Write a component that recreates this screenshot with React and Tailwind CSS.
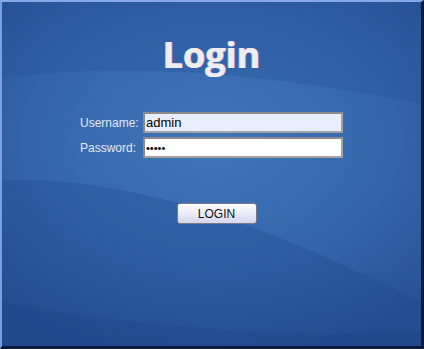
import React from "react";

export default function App() {
  return (
    <div className="w-[424px] h-[349px] bg-[#c0c0c0]">
      <div className="relative w-[424px] h-[349px] overflow-hidden border-t-2 border-l-2 border-r-[3px] border-b-[3px] border-t-[#86a8e6] border-l-[#7c9fe0] border-r-[#0d1a3c] border-b-[#0d1a3c] bg-[radial-gradient(ellipse_75%_65%_at_50%_40%,#4076ba_0%,#3566ac_55%,#284f94_100%)]">
        {/* background waves */}
        <svg
          className="absolute inset-0 pointer-events-none"
          width="419"
          height="344"
          viewBox="0 0 419 344"
        >
          <path d="M0 76 C120 60 260 70 419 102 L419 0 L0 0 Z" fill="#1f4a92" opacity="0.25" />
          <path d="M0 178 C80 175 170 195 250 225 C320 252 380 280 419 300 L419 344 L0 344 Z" fill="#1c4388" opacity="0.28" />
          <path d="M0 300 C150 328 300 336 419 330 L419 344 L0 344 Z" fill="#173a7a" opacity="0.2" />
        </svg>

        <div className="relative flex flex-col items-center pt-[35px]">
          <h1 className="text-[36px] leading-none font-bold text-[#eeeeee] font-['Open_Sans',sans-serif] [text-shadow:0.6px_0_0_#f0a0c8,-0.6px_0_0_#a0e0ff]">
            Login
          </h1>

          <div className="mt-[39px] grid grid-cols-[63px_200px] gap-y-1 items-center font-['Liberation_Sans',Arial,sans-serif]">
            <label className="text-[12px] text-[#e2eaf7]">Username:</label>
            <input
              className="h-[21px] w-[200px] border-2 border-[#a2a2a2] border-t-[#8a8a8a] border-l-[#8a8a8a] bg-[#e8eefb] px-[1px] text-[13px] text-black outline-none"
              defaultValue="admin"
            />
            <label className="text-[12px] text-[#e2eaf7]">Password:</label>
            <input
              type="password"
              className="h-[21px] w-[200px] border-2 border-[#a2a2a2] border-t-[#8a8a8a] border-l-[#8a8a8a] bg-white px-[1px] text-[11px] text-black outline-none"
              defaultValue="admin"
            />
          </div>

          <button className="mt-[45px] ml-[10px] h-[21px] w-[80px] rounded-[3px] border border-[#7a7a86] bg-gradient-to-b from-white to-[#d6d6f0] text-[12px] text-[#111] font-['Liberation_Sans',Arial,sans-serif]">
            LOGIN
          </button>
        </div>
      </div>
    </div>
  );
}
